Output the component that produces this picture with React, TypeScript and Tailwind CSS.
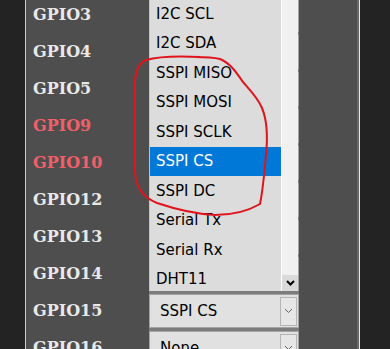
import React from "react";

type Pin = { name: string; value: string; warn?: boolean };

// values of the rows behind the open list are not visible in the shot
const pins: Pin[] = [
  { name: "GPIO3", value: "" },
  { name: "GPIO4", value: "" },
  { name: "GPIO5", value: "" },
  { name: "GPIO9", value: "", warn: true },
  { name: "GPIO10", value: "", warn: true },
  { name: "GPIO12", value: "" },
  { name: "GPIO13", value: "" },
  { name: "GPIO14", value: "" },
  { name: "GPIO15", value: "SSPI CS" },
  { name: "GPIO16", value: "None" },
];

const options = [
  "I2C SCL",
  "I2C SDA",
  "SSPI MISO",
  "SSPI MOSI",
  "SSPI SCLK",
  "SSPI CS",
  "SSPI DC",
  "Serial Tx",
  "Serial Rx",
  "DHT11",
];

const Chevron = ({ bold }: { bold?: boolean }) => (
  <svg width="9" height="6" viewBox="0 0 9 6">
    <path
      d="M1 1 L4.5 4.5 L8 1"
      fill="none"
      stroke={bold ? "#000" : "#666"}
      strokeWidth={bold ? 2 : 1}
    />
  </svg>
);

const SelectBox = ({ value }: { value: string }) => (
  <div className="flex flex-col w-[150px]">
    <div className="h-[34px] bg-[#e1e1e1] border border-[#a3a3a3] flex items-center justify-between pl-[10px] pr-[1px]">
      <span className="text-[15px] text-black font-['DejaVu_Sans',sans-serif]">
        {value}
      </span>
      <div className="w-[17px] h-[29px] border border-[#b4b4b4] bg-[#e6e6e6] flex items-center justify-center">
        <Chevron />
      </div>
    </div>
    <div className="h-[3px] bg-[#7c7c7c]" />
  </div>
);

const DropList = () => (
  <div className="absolute top-0 left-[123px] w-[149px] h-[291px] bg-[#dcdcdc] flex overflow-hidden">
    <div className="flex-1 flex flex-col mt-[-1px] border-l border-[#c4c4c4]">
      {options.map((o) => (
        <div
          key={o}
          className={
            o === "SSPI CS"
              ? "h-[29.5px] shrink-0 flex items-center pl-[6px] bg-[#0078d7] text-white"
              : "h-[29.5px] shrink-0 flex items-center pl-[6px] text-black"
          }
        >
          <span className="text-[15px] font-['DejaVu_Sans',sans-serif]">{o}</span>
        </div>
      ))}
    </div>
    <div className="w-[17px] border-l border-white bg-[#f0f0f0] flex flex-col justify-end">
      <div className="h-[16px] bg-[#dadada] flex items-center justify-center">
        <Chevron bold />
      </div>
    </div>
  </div>
);

export default function App() {
  return (
    <div className="relative w-[390px] h-[349px] overflow-hidden flex bg-[#232323]">
      <div className="w-[25px] bg-[#232323]" />
      <div className="w-[1px] bg-[#cccccc]" />
      <div className="relative w-[331px] bg-[#4e4e4e] overflow-hidden">
        <div className="flex flex-col mt-[-2px]">
          {pins.map((p) => (
            <div key={p.name} className="flex h-[37px]">
              <div className="w-[123px] h-[34px] flex items-center pl-[7px]">
                <span
                  className={
                    p.warn
                      ? "text-[16px] font-bold text-[#f25f68] font-['DejaVu_Serif',serif]"
                      : "text-[16px] font-bold text-[#e8e8e8] font-['DejaVu_Serif',serif]"
                  }
                >
                  {p.name}
                </span>
              </div>
              <SelectBox value={p.value} />
            </div>
          ))}
        </div>
        <DropList />
      </div>
      <div className="w-[2px] bg-[#686868]" />
      <div className="w-[1px] bg-[#e6e6e6]" />
      <div className="flex-1 bg-[#232323]" />
      <svg
        className="absolute inset-0 pointer-events-none"
        width="390"
        height="349"
        viewBox="0 0 390 349"
      >
        <path
          d="M200 57 C180 56 160 56 146 60 C139 63 136 70 135 80 L135 170 C135 185 142 197 157 203 C175 209 195 214 215 215 C232 215 248 211 260 204 C263 190 264 175 266 155 C268 135 267 120 262 108 C258 98 250 90 243 82 C236 72 230 63 220 59 C212 57 205 57 195 57"
          fill="none"
          stroke="#e0141c"
          strokeWidth="2"
          strokeLinecap="round"
        />
      </svg>
    </div>
  );
}
